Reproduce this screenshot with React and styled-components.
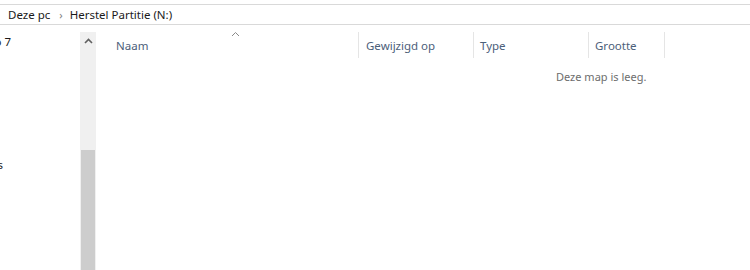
import React from 'react'
import styled, { createGlobalStyle } from 'styled-components'

const Global = createGlobalStyle`
  html, body { margin:0; padding:0; background:#fff; overflow:hidden; }
  body { font-family: "Noto Sans", "Open Sans", sans-serif; font-size:11.5px; }
`
const Window = styled.div`
  width:750px;
  height:270px;
  display:flex;
  flex-direction:column;
  background:#fff;
  overflow:hidden;
`
const AddressBar = styled.div`
  margin-top:4px;
  height:19px;
  border-top:1px solid #d9d9d9;
  border-bottom:1px solid #d9d9d9;
  display:flex;
  align-items:center;
  padding-left:8px;
  color:#1a1a1a;
`
const Crumb = styled.span`
  white-space:nowrap;
`
const Chevron = styled.span`
  color:#808080;
  font-size:11px;
  margin:0 7px 0 9px;
`
const Main = styled.div`
  flex:1;
  display:flex;
  padding-top:7px;
`
const Nav = styled.div`
  width:80px;
  overflow:hidden;
`
const NavItem = styled.div`
  width:${p => p.$end}px;
  display:flex;
  justify-content:flex-end;
  white-space:nowrap;
  margin-top:${p => p.$top}px;
  color:#1a1a1a;
`
const Scrollbar = styled.div`
  width:16px;
  display:flex;
  flex-direction:column;
  background:#f0f0f0;
`
const ScrollBtn = styled.div`
  height:17px;
  display:flex;
  align-items:center;
  justify-content:center;
`
const Track = styled.div`
  height:101px;
`
const Thumb = styled.div`
  flex:1;
  margin:0 1px;
  background:#cdcdcd;
`
const Content = styled.div`
  flex:1;
  display:flex;
  flex-direction:column;
  padding-left:4px;
`
const Header = styled.div`
  display:flex;
  height:26px;
  position:relative;
`
const Col = styled.div`
  width:${p => p.$w}px;
  box-sizing:border-box;
  padding-left:${p => p.$pad}px;
  border-right:1px solid #e5e5e5;
  display:flex;
  align-items:center;
  color:#4c607a;
  white-space:nowrap;
`
const SortArrow = styled.svg`
  position:absolute;
  left:131px;
  top:-1px;
`
const Empty = styled.div`
  margin-top:11px;
  padding-left:456px;
  color:#6d6d6d;
  font-size:11px;
`

export default function App() {
  return (
    <Window>
      <Global />
      <AddressBar>
        <Crumb>Deze pc</Crumb>
        <Chevron>›</Chevron>
        <Crumb>Herstel Partitie (N:)</Crumb>
      </AddressBar>
      <Main>
        <Nav>
          <NavItem $end={11} $top={2}>Video 7</NavItem>
          <NavItem $end={3} $top={108}>Documents</NavItem>
        </Nav>
        <Scrollbar>
          <ScrollBtn>
            <svg width="9" height="6" viewBox="0 0 9 6">
              <path d="M1 5 L4.5 1.5 L8 5" fill="none" stroke="#606060" strokeWidth="1.6" />
            </svg>
          </ScrollBtn>
          <Track />
          <Thumb />
        </Scrollbar>
        <Content>
          <Header>
            <Col $w={259} $pad={16}>Naam</Col>
            <Col $w={115} $pad={7}>Gewijzigd op</Col>
            <Col $w={115} $pad={6}>Type</Col>
            <Col $w={76} $pad={6}>Grootte</Col>
            <SortArrow width="9" height="6" viewBox="0 0 9 6">
              <path d="M1 5 L4.5 1.5 L8 5" fill="none" stroke="#8a8a8a" strokeWidth="1" />
            </SortArrow>
          </Header>
          <Empty>Deze map is leeg.</Empty>
        </Content>
      </Main>
    </Window>
  )
}
